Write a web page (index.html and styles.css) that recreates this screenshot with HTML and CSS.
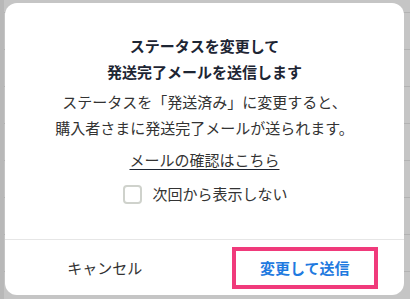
FILE: index.html
```html
<!DOCTYPE html>
<html lang="ja">
<head>
<meta charset="utf-8">
<link rel="stylesheet" href="styles.css">
</head>
<body>
<div class="backdrop">
  <div class="modal">
    <div class="content">
      <h2 class="title">ステータスを変更して<br>発送完了メールを送信します</h2>
      <p class="desc">ステータスを「発送済み」に変更すると、<br>購入者さまに発送完了メールが送られます。</p>
      <a class="link" href="#">メールの確認はこちら</a>
      <label class="check"><span class="box"></span><span>次回から表示しない</span></label>
    </div>
    <div class="footer">
      <div class="btn cancel">キャンセル</div>
      <div class="btn primary"><span class="highlight">変更して送信</span></div>
    </div>
  </div>
</div>
</body>
</html>
```

FILE: styles.css
```css
html, body {
  margin: 0;
  padding: 0;
}
body {
  width: 410px;
  height: 299px;
  overflow: hidden;
  font-family: "Noto Sans CJK JP", "Noto Sans", sans-serif;
  background-color: #c5c5c5;
  background-image:
    linear-gradient(to right, #b8b8b8 0, #b8b8b8 4px, transparent 4px),
    repeating-linear-gradient(to bottom, transparent 0, transparent 12px, #b2b2b2 12px, #b2b2b2 13px, transparent 13px, transparent 37px);
}
.backdrop {
  padding: 3px 6px 4px 5px;
  height: 292px;
}
.modal {
  background: #fff;
  border-radius: 12px;
  height: 292px;
  display: flex;
  flex-direction: column;
  overflow: hidden;
}
.content {
  flex: 1;
  display: flex;
  flex-direction: column;
  align-items: center;
  padding-top: 30px;
}
.title {
  margin: 0;
  font-size: 15px;
  line-height: 26px;
  font-weight: 700;
  color: #1d2533;
  text-align: center;
}
.desc {
  margin: 4px 0 0;
  font-size: 15px;
  line-height: 26px;
  color: #333;
  text-align: center;
}
.link {
  margin-top: 6px;
  font-size: 15px;
  line-height: 26px;
  color: #333;
  text-decoration: underline;
  text-decoration-color: #1d2533;
  text-underline-offset: 3px;
}
.check {
  margin-top: 8px;
  display: flex;
  align-items: center;
  gap: 10px;
  font-size: 15px;
  line-height: 26px;
  color: #333;
  margin-left: 2px;
}
.box {
  width: 15px;
  height: 15px;
  border: 2px solid #cfd2cc;
  border-radius: 4px;
  background: #fff;
}
.footer {
  height: 55px;
  border-top: 1px solid #e6e6e6;
  display: flex;
}
.btn {
  flex: 1;
  display: flex;
  align-items: center;
  justify-content: center;
  font-size: 15px;
}
.cancel {
  color: #333;
}
.primary {
  color: #1f7ae0;
  font-weight: 700;
}
.highlight {
  box-sizing: border-box;
  width: 146px;
  height: 42px;
  border: 4px solid #f03a7b;
  display: flex;
  align-items: center;
  justify-content: center;
  margin-left: 1px;
}
```
